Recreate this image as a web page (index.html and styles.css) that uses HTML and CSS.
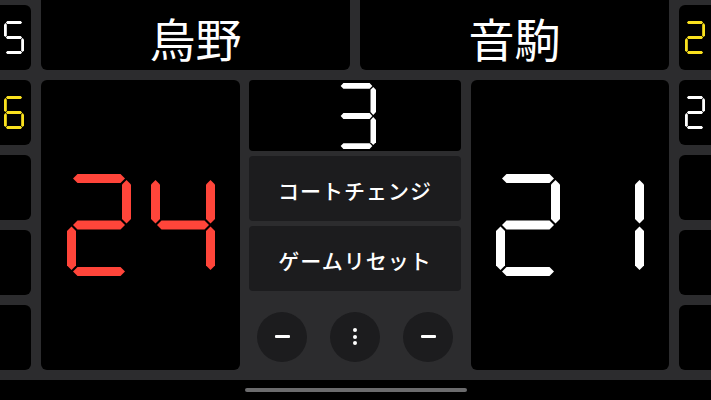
FILE: index.html
```html
<!DOCTYPE html>
<html lang="ja">
<head>
<meta charset="utf-8">
<title>Scoreboard</title>
<link rel="stylesheet" href="styles.css">
</head>
<body>
<div class="board">
  <div class="side side-left">
    <div class="side-cell">
      <svg class="seg seg-small" viewBox="0 0 64 102" preserveAspectRatio="none" role="img" aria-label="5">
        <title>5</title>
        <defs>
          <polygon id="sa" points="6,4.5 10.5,0 53.5,0 58,4.5 53.5,9 10.5,9"/>
          <polygon id="sg" points="6,51 10.5,46.5 53.5,46.5 58,51 53.5,55.5 10.5,55.5"/>
          <polygon id="sd" points="6,97.5 10.5,93 53.5,93 58,97.5 53.5,102 10.5,102"/>
          <polygon id="sf" points="4.5,6 9,10.5 9,45 4.5,49.5 0,45 0,10.5"/>
          <polygon id="sb" points="59.5,6 64,10.5 64,45 59.5,49.5 55,45 55,10.5"/>
          <polygon id="se" points="4.5,52.5 9,57 9,91.5 4.5,96 0,91.5 0,57"/>
          <polygon id="sc" points="59.5,52.5 64,57 64,91.5 59.5,96 55,91.5 55,57"/>
        </defs>
        <use href="#sa"/><use href="#sf"/><use href="#sg"/><use href="#sc"/><use href="#sd"/>
      </svg>
    </div>
    <div class="side-cell yellow">
      <svg class="seg seg-small" viewBox="0 0 64 102" preserveAspectRatio="none" role="img" aria-label="6">
        <title>6</title>
        <use href="#sa"/><use href="#sf"/><use href="#sg"/><use href="#se"/><use href="#sc"/><use href="#sd"/>
      </svg>
    </div>
    <div class="side-cell"></div>
    <div class="side-cell"></div>
    <div class="side-cell"></div>
  </div>

  <div class="main">
    <div class="names">
      <div class="name">烏野</div>
      <div class="name">音駒</div>
    </div>
    <div class="scores">
      <div class="score red" role="img" aria-label="24">
        <svg class="seg seg-big" viewBox="0 0 64 102"><title>2</title>
          <use href="#sa"/><use href="#sb"/><use href="#sg"/><use href="#se"/><use href="#sd"/>
        </svg>
        <svg class="seg seg-big" viewBox="0 0 64 102"><title>4</title>
          <use href="#sf"/><use href="#sg"/><use href="#sb"/><use href="#sc"/>
        </svg>
      </div>
      <div class="mid">
        <div class="set">
          <svg class="seg seg-set" viewBox="0 0 64 102" preserveAspectRatio="none" role="img" aria-label="3"><title>3</title>
            <use href="#sa"/><use href="#sb"/><use href="#sg"/><use href="#sc"/><use href="#sd"/>
          </svg>
        </div>
        <div class="btn">コートチェンジ</div>
        <div class="btn">ゲームリセット</div>
        <div class="ctrls">
          <div class="circle"><span class="minus"></span></div>
          <div class="circle"><span class="dots"><i></i><i></i><i></i></span></div>
          <div class="circle"><span class="minus"></span></div>
        </div>
      </div>
      <div class="score score-right" role="img" aria-label="21">
        <svg class="seg seg-big" viewBox="0 0 64 102"><title>2</title>
          <use href="#sa"/><use href="#sb"/><use href="#sg"/><use href="#se"/><use href="#sd"/>
        </svg>
        <svg class="seg seg-big" viewBox="0 0 64 102"><title>1</title>
          <use href="#sb"/><use href="#sc"/>
        </svg>
      </div>
    </div>
  </div>

  <div class="side side-right">
    <div class="side-cell yellow">
      <svg class="seg seg-small" viewBox="0 0 64 102" preserveAspectRatio="none" role="img" aria-label="2"><title>2</title>
        <use href="#sa"/><use href="#sb"/><use href="#sg"/><use href="#se"/><use href="#sd"/>
      </svg>
    </div>
    <div class="side-cell">
      <svg class="seg seg-small" viewBox="0 0 64 102" preserveAspectRatio="none" role="img" aria-label="2"><title>2</title>
        <use href="#sa"/><use href="#sb"/><use href="#sg"/><use href="#se"/><use href="#sd"/>
      </svg>
    </div>
    <div class="side-cell"></div>
    <div class="side-cell"></div>
    <div class="side-cell"></div>
  </div>
</div>
<div class="home"><div class="home-bar"></div></div>
</body>
</html>
```

FILE: styles.css
```css
html, body {
  margin: 0;
  padding: 0;
}
body {
  width: 711px;
  height: 400px;
  overflow: hidden;
  background: #000;
  color: #fff;
  font-family: "Noto Sans CJK JP", "Noto Sans", sans-serif;
}
.board {
  height: 380px;
  background: #2c2c2e;
  display: grid;
  grid-template-columns: 31px 1fr 32px;
  column-gap: 10px;
}
.side {
  display: flex;
  flex-direction: column;
  gap: 10px;
  padding-top: 5px;
}
.side-cell {
  height: 65px;
  background: #000;
  display: flex;
  align-items: center;
  color: #fff;
}
.side-left .side-cell {
  border-radius: 0 6px 6px 0;
  justify-content: flex-end;
  padding-right: 7px;
}
.side-right .side-cell {
  border-radius: 6px 0 0 6px;
  justify-content: flex-start;
  padding-left: 6px;
}
.yellow { color: #fae11e; }
.red { color: #ff453a; }
.seg {
  fill: currentColor;
  display: block;
  overflow: visible;
}
.seg-small { width: 20px; height: 33px; }
.seg-big { width: 64px; height: 102px; }
.seg-set { width: 39px; height: 66px; }
.main {
  display: flex;
  flex-direction: column;
  gap: 10px;
}
.names {
  height: 70px;
  display: grid;
  grid-template-columns: 1fr 1fr;
  column-gap: 10px;
}
.name {
  background: #000;
  border-radius: 0 0 6px 6px;
  display: flex;
  align-items: center;
  justify-content: center;
  font-size: 46px;
  line-height: 1;
  padding-top: 3px;
}
.scores {
  height: 290px;
  display: grid;
  grid-template-columns: 199px 212px 1fr;
  column-gap: 9px;
}
.score {
  background: #000;
  border-radius: 6px;
  display: flex;
  align-items: center;
  justify-content: center;
  gap: 20px;
  color: #fff;
}
.score-right {
  margin-left: 1px;
}
.score.red { color: #ff453a; }
.mid {
  display: flex;
  flex-direction: column;
  gap: 5px;
}
.set {
  height: 71px;
  background: #000;
  border-radius: 4px;
  display: flex;
  align-items: center;
  justify-content: center;
  padding-left: 3px;
}
.btn {
  height: 65px;
  background: #1c1c1e;
  border-radius: 4px;
  display: flex;
  align-items: center;
  justify-content: center;
  font-size: 21px;
  font-weight: 500;
  letter-spacing: 1px;
  padding-top: 2px;
  box-sizing: border-box;
}
.ctrls {
  flex: 1;
  display: flex;
  align-items: center;
  justify-content: center;
  gap: 23px;
  padding-top: 7px;
}
.circle {
  width: 50px;
  height: 50px;
  border-radius: 50%;
  background: #1c1c1e;
  display: flex;
  align-items: center;
  justify-content: center;
}
.minus {
  display: block;
  width: 15px;
  height: 3px;
  background: #fff;
  border-radius: 1px;
}
.dots {
  display: flex;
  flex-direction: column;
  gap: 2.5px;
}
.dots i {
  display: block;
  width: 4px;
  height: 4px;
  border-radius: 50%;
  background: #fff;
}
.home {
  height: 20px;
  display: flex;
  justify-content: center;
  padding-top: 8px;
  box-sizing: border-box;
}
.home-bar {
  width: 222px;
  height: 4px;
  border-radius: 2px;
  background: #6b6b6d;
}
```
